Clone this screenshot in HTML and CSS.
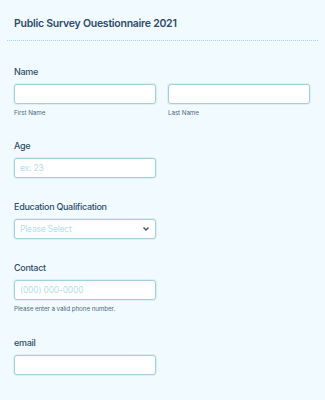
FILE: index.html
```html
<!DOCTYPE html>
<html lang="en">
<head>
    <meta charset="UTF-8">
    <title>Public Survey Questionnaire 2021</title>
    <link rel="stylesheet" href="styles.css">
</head>
<body>
    <div class="form-header">
        <h1 class="form-title">Public Survey Ouestionnaire 2021</h1>
    </div>

    <form class="form-body">
        <!-- Name -->
        <div class="field">
            <label class="field-label">Name</label>
            <div class="name-row">
                <div class="name-part">
                    <input type="text" class="field-input">
                    <span class="sub-label">First Name</span>
                </div>
                <div class="name-part">
                    <input type="text" class="field-input">
                    <span class="sub-label">Last Name</span>
                </div>
            </div>
        </div>

        <div class="field">
            <label class="field-label">Age</label>
            <input type="text" class="field-input half" placeholder="ex: 23">
        </div>

        <div class="field">
            <label class="field-label">Education Qualification</label>
            <div class="select-box half">
                <span class="select-text">Please Select</span>
                <svg class="select-arrow" width="8" height="6" viewBox="0 0 8 6">
                    <path d="M1.5 1.5 L4 4 L6.5 1.5" fill="none" stroke="#3d5a73" stroke-width="1.5"/>
                </svg>
            </div>
        </div>

        <div class="field">
            <label class="field-label">Contact</label>
            <input type="text" class="field-input half" placeholder="(000) 000-0000">
            <span class="sub-label">Please enter a valid phone number.</span>
        </div>

        <div class="field">
            <label class="field-label">email</label>
            <input type="text" class="field-input half">
        </div>
    </form>
</body>
</html>
```

FILE: styles.css
```css
body {
    margin: 0;
    background: #f1fafe;
    font-family: Inter, 'Noto Sans', sans-serif;
    color: #2f4e6b;
}

/* header */
.form-header {
    margin: 0 7px;
    padding: 15px 7px 8px;
    border-bottom: 1px dotted #9ed5e6;
}

.form-title {
    margin: 0;
    font-size: 10.5px;
    line-height: 17px;
    font-weight: 600;
    letter-spacing: -0.25px;
    color: #2c4c6b;
}

/* form */
.form-body {
    padding: 24px 14px 0;
}

.field {
    display: flex;
    flex-direction: column;
    align-items: flex-start;
    margin-bottom: 22px;
}

.field-label {
    font-size: 9px;
    line-height: 14px;
    font-weight: 500;
    letter-spacing: -0.3px;
    color: #2f4e6b;
    margin-bottom: 5px;
}

.field-input {
    box-sizing: border-box;
    height: 20px;
    width: 100%;
    padding: 0 5px;
    border: 1px solid #a3d0de;
    border-radius: 3px;
    background: #ffffff;
    font-family: inherit;
    font-size: 8.5px;
    letter-spacing: -0.2px;
    box-shadow: 0 0 0 1px rgba(163, 208, 222, 0.25);
    outline: none;
}

    .field-input::placeholder {
        color: #b6deea;
    }

.half {
    width: 142px;
}

.name-row {
    display: flex;
    gap: 12px;
    width: 296px;
}

.name-part {
    flex: 1;
    display: flex;
    flex-direction: column;
}

.sub-label {
    margin-top: 4px;
    font-size: 6.3px;
    line-height: 10px;
    letter-spacing: -0.1px;
    color: #4f6a82;
}

.field:first-child {
    margin-bottom: 21px;
}

/* select */
.select-box {
    box-sizing: border-box;
    height: 20px;
    display: flex;
    align-items: center;
    justify-content: space-between;
    padding: 0 5px;
    border: 1px solid #a3d0de;
    border-radius: 3px;
    background: #ffffff;
    box-shadow: 0 0 0 1px rgba(163, 208, 222, 0.25);
}

.select-text {
    font-size: 8.5px;
    letter-spacing: -0.2px;
    color: #b6deea;
}
```
